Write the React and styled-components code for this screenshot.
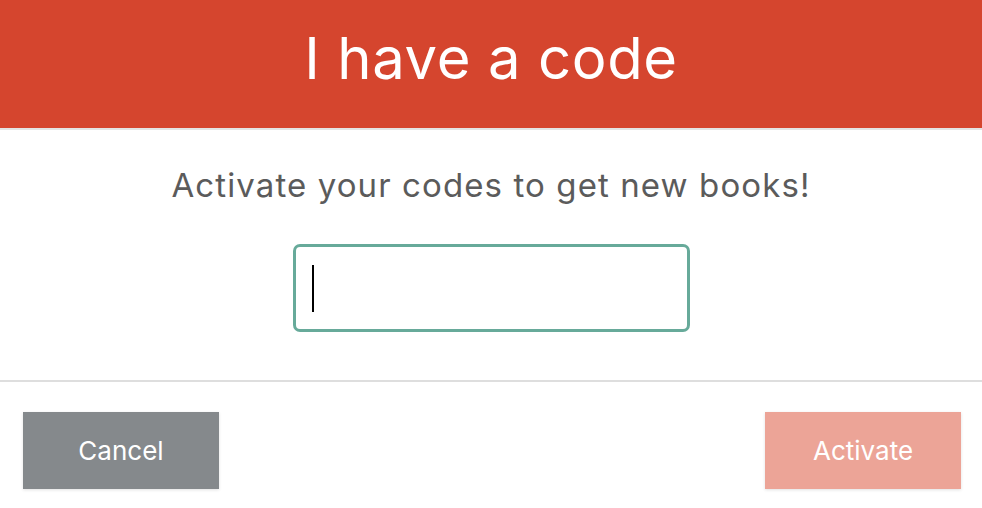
import React from "react";
import styled, { createGlobalStyle } from "styled-components";

const Global = createGlobalStyle`
  html, body { margin: 0; padding: 0; background: #ffffff; }
  body { font-family: Inter, "Open Sans", sans-serif; }
`;

const Dialog = styled.div`
  width: 982px;
  height: 508px;
  display: flex;
  flex-direction: column;
  background: #fff;
  overflow: hidden;
`;

const Header = styled.header`
  height: 128px;
  flex: none;
  background: #d5452e;
  border-bottom: 2px solid #e4e4e4;
  display: flex;
  align-items: center;
  justify-content: center;
  box-sizing: content-box;
`;

const Title = styled.h1`
  margin: 0;
  margin-top: -13px;
  color: #fff;
  font-family: Inter, sans-serif;
  font-weight: 400;
  font-size: 58px;
  letter-spacing: 0.6px;
  line-height: 1;
`;

const Body = styled.section`
  flex: none;
  display: flex;
  flex-direction: column;
  align-items: center;
  padding-top: 38px;
  height: 252px;
  box-sizing: border-box;
  border-bottom: 2px solid #dedede;
`;

const Subtitle = styled.p`
  margin: 0;
  color: #5b5b5b;
  font-size: 33px;
  line-height: 34px;
  letter-spacing: 1.1px;
  font-weight: 400;
`;

const CodeInput = styled.div`
  margin-top: 42px;
  width: 397px;
  height: 88px;
  box-sizing: border-box;
  border: 3px solid #67aa9a;
  border-radius: 7px;
  display: flex;
  align-items: center;
  padding-left: 16px;
`;

const Caret = styled.span`
  display: block;
  width: 2px;
  height: 47px;
  background: #000;
`;

const Footer = styled.footer`
  display: flex;
  justify-content: space-between;
  padding: 30px 21px 0 23px;
`;

const Button = styled.button`
  width: 196px;
  height: 77px;
  border: none;
  border-radius: 0;
  background: ${(p) => (p.$variant === "primary" ? "#eca497" : "#85898c")};
  color: #fff;
  font-family: Inter, sans-serif;
  font-size: 26px;
  font-weight: 400;
  box-shadow: 0 1px 3px rgba(0, 0, 0, 0.12);
  cursor: pointer;
  padding: 0;
`;

export default function App() {
  return (
    <>
      <Global />
      <Dialog>
        <Header>
          <Title>I have a code</Title>
        </Header>
        <Body>
          <Subtitle>Activate your codes to get new books!</Subtitle>
          <CodeInput>
            <Caret />
          </CodeInput>
        </Body>
        <Footer>
          <Button>Cancel</Button>
          <Button $variant="primary">Activate</Button>
        </Footer>
      </Dialog>
    </>
  );
}
